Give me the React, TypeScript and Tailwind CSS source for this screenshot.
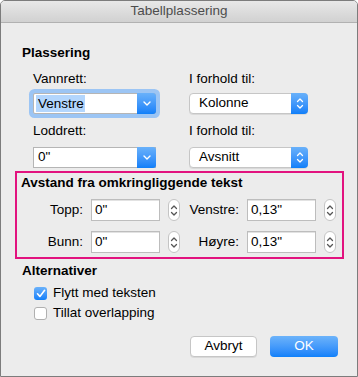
import React from "react";

const font = { fontFamily: '"Helvetica Neue", "Liberation Sans", Arial, sans-serif' };

function ChevronDown() {
  return (
    <svg width="8" height="5" viewBox="0 0 8 5" fill="none">
      <path d="M1 1l3 3 3-3" stroke="white" strokeWidth="1.4" strokeLinecap="round" strokeLinejoin="round" />
    </svg>
  );
}

function ChevronUpDown({ color = "white" }: { color?: string }) {
  return (
    <svg width="8" height="13" viewBox="0 0 8 13" fill="none">
      <path d="M1.5 4.5L4 2l2.5 2.5" stroke={color} strokeWidth="1.3" strokeLinecap="round" strokeLinejoin="round" />
      <path d="M1.5 8.5L4 11l2.5-2.5" stroke={color} strokeWidth="1.3" strokeLinecap="round" strokeLinejoin="round" />
    </svg>
  );
}

function ComboBox({ value, focused }: { value: string; focused?: boolean }) {
  return (
    <div
      className={`flex h-[21px] w-[123px] items-stretch border border-[#b5b5b5] bg-white ${
        focused ? "rounded-[2px] shadow-[0_0_0_4px_#9cc5f4]" : ""
      }`}
    >
      <div className="flex flex-1 items-center pl-[2px] text-[13.5px] text-black">
        <span className={focused ? "bg-[#b3d6fd] pl-[2px] pr-[1px] leading-[17px]" : "pl-[2px]"}>{value}</span>
      </div>
      <div className="-my-px -mr-px flex w-[19px] items-center justify-center rounded-r-[3px] bg-gradient-to-b from-[#69b1fa] to-[#0c7ff9]">
        <ChevronDown />
      </div>
    </div>
  );
}

function PopUp({ value }: { value: string }) {
  return (
    <div className="flex h-[21px] w-[119px] items-stretch rounded-[4px] border border-[#c6c6c6] bg-white shadow-[0_1px_0_rgba(0,0,0,0.08)]">
      <div className="flex flex-1 items-center pl-[9px] text-[13.5px] text-black">{value}</div>
      <div className="-my-px -mr-px flex w-[17px] items-center justify-center rounded-r-[4px] bg-gradient-to-b from-[#69b1fa] to-[#0c7ff9]">
        <ChevronUpDown />
      </div>
    </div>
  );
}

function Stepper() {
  return (
    <div className="flex h-[22px] w-[12px] items-center justify-center rounded-[6px] border border-[#c4c4c4] bg-white">
      <ChevronUpDown color="#555" />
    </div>
  );
}

function Field({ label, value, labelW }: { label: string; value: string; labelW: string }) {
  return (
    <div className="flex items-center">
      <div className={`${labelW} text-right text-[13.5px] text-black`}>{label}</div>
      <div className="ml-[8px] flex h-[22px] w-[69px] items-center border border-[#bdbdbd] bg-white pl-[3px] text-[13.5px] text-black shadow-[inset_0_1px_0_#e2e2e2]">
        {value}
      </div>
      <div className="ml-[8px]">
        <Stepper />
      </div>
    </div>
  );
}

function Checkbox({ checked, label }: { checked?: boolean; label: string }) {
  return (
    <div className="flex h-[20px] items-center">
      {checked ? (
        <div className="flex h-[13px] w-[13px] items-center justify-center rounded-[3px] bg-gradient-to-b from-[#69b1fa] to-[#0c7ff9]">
          <svg width="10" height="9" viewBox="0 0 10 9" fill="none">
            <path d="M1.5 4.8l2.4 2.6L8.6 1.3" stroke="white" strokeWidth="1.6" strokeLinecap="round" strokeLinejoin="round" />
          </svg>
        </div>
      ) : (
        <div className="h-[13px] w-[13px] rounded-[3px] border border-[#b0b0b0] bg-white" />
      )}
      <span className="ml-[6px] text-[13.5px] text-black">{label}</span>
    </div>
  );
}

export default function App() {
  return (
    <div style={font} className="h-[377px] w-[358px] overflow-hidden rounded-t-[5px] border border-[#7c7c7c] bg-[#ececec]">
      <div className="flex h-[22px] items-center justify-center border-b border-[#b1b1b1] bg-gradient-to-b from-[#e8e8e8] to-[#d1d1d1] text-[13.5px] text-[#4d4d4d]">
        Tabellplassering
      </div>

      <div className="pl-[21px] pt-[22px]">
        <div className="text-[13.5px] font-bold leading-[16px] text-black">Plassering</div>

        <div className="mt-[10px] flex pl-[11px]">
          <div className="w-[156px]">
            <div className="text-[13.5px] leading-[16px] text-black">Vannrett:</div>
            <div className="mt-[6px]">
              <ComboBox value="Venstre" focused />
            </div>
            <div className="mt-[9px] text-[13.5px] leading-[16px] text-black">Loddrett:</div>
            <div className="mt-[8px]">
              <ComboBox value={'0"'} />
            </div>
          </div>
          <div>
            <div className="text-[13.5px] leading-[16px] text-black">I forhold til:</div>
            <div className="mt-[6px]">
              <PopUp value="Kolonne" />
            </div>
            <div className="mt-[9px] text-[13.5px] leading-[16px] text-black">I forhold til:</div>
            <div className="mt-[8px]">
              <PopUp value="Avsnitt" />
            </div>
          </div>
        </div>
      </div>

      <div className="ml-[14px] mt-[3px] h-[88px] w-[329px] border-2 border-[#e2137f] pl-[4px] pt-[2px]">
        <div className="text-[13.5px] font-bold leading-[16px] text-black">Avstand fra omkringliggende tekst</div>
        <div className="mt-[8px] flex flex-col gap-[10px]">
          <div className="flex">
            <Field label="Topp:" value={'0"'} labelW="w-[62px]" />
            <Field label="Venstre:" value={'0,13"'} labelW="w-[59px]" />
          </div>
          <div className="flex">
            <Field label="Bunn:" value={'0"'} labelW="w-[62px]" />
            <Field label="Høyre:" value={'0,13"'} labelW="w-[59px]" />
          </div>
        </div>
      </div>

      <div className="pl-[21px] pt-[4px]">
        <div className="text-[13.5px] font-bold leading-[16px] text-black">Alternativer</div>
        <div className="mt-[4px] pl-[12px]">
          <Checkbox checked label="Flytt med teksten" />
          <Checkbox label="Tillat overlapping" />
        </div>
      </div>

      <div className="mt-[13px] flex justify-end gap-[13px] pr-[19px]">
        <div className="flex h-[21px] w-[67px] items-center justify-center rounded-[4px] border border-[#c6c6c6] bg-white text-[13.5px] text-black shadow-[0_1px_0_rgba(0,0,0,0.08)]">
          Avbryt
        </div>
        <div className="flex h-[21px] w-[68px] items-center justify-center rounded-[4px] bg-gradient-to-b from-[#6cb3fa] to-[#0d80fa] text-[13.5px] text-white">
          OK
        </div>
      </div>
    </div>
  );
}
